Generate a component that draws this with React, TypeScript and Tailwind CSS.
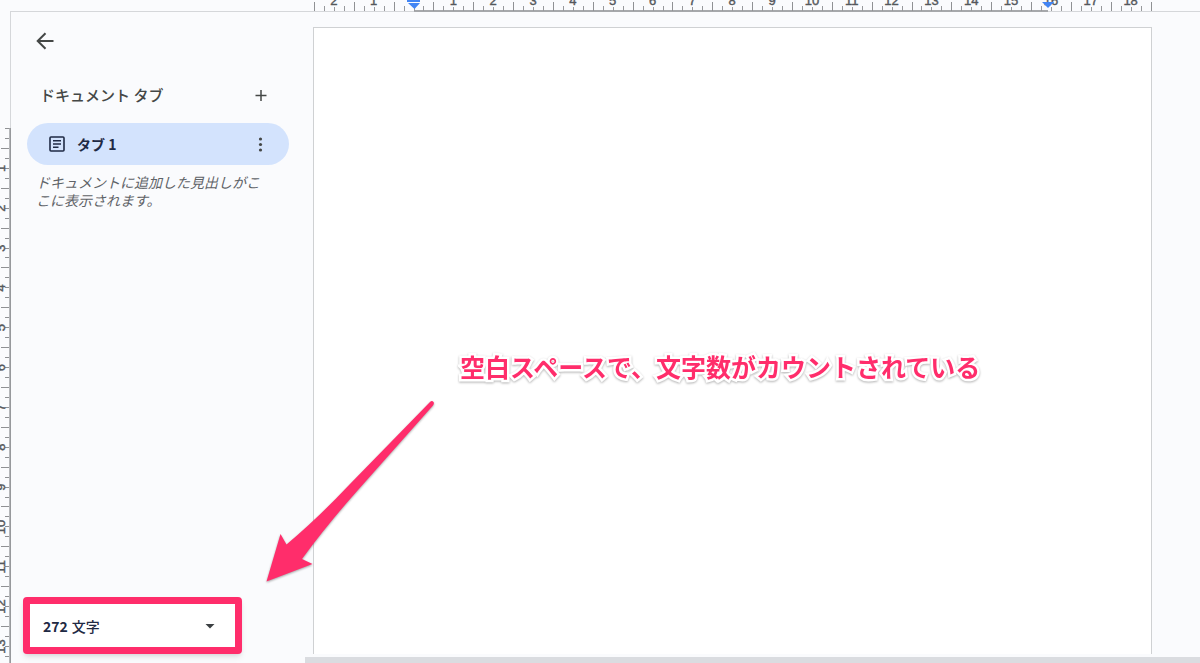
import { useState } from "react";

const UNIT = 39.84;
const range = (from: number, to: number) => Array.from({ length: to - from + 1 }, (_, i) => from + i);

function TopRuler() {
  const zero = 413.5;
  const ticks = range(-10, 74);
  return (
    <svg className="block shrink-0 w-full h-3" aria-hidden="true">
      <rect x="10" y="11" width="100%" height="1" fill="#d5d7da" />
      <rect x="414" y="10" width="634" height="2" fill="#a6a8ab" />
      {ticks.map((tick) => {
        const x = Math.round(zero + (tick * UNIT) / 4);
        const isHalf = Math.abs(tick % 4) === 2;
        const isNumber = tick % 4 === 0;
        const top = isHalf ? 2 : isNumber ? 7 : 6;
        return <rect key={tick} x={x} y={top} width="1" height={11 - top} fill={isHalf ? "#8f9194" : "#97999c"} />;
      })}
      {range(-2, 18).filter((n) => n !== 0).map((n) => (
        <text key={n} x={zero + n * UNIT} y="5" textAnchor="middle" fontFamily="Liberation Sans, sans-serif" fontSize="13" fill="#55585c" stroke="#55585c" strokeWidth="0.4">
          {Math.abs(n)}
        </text>
      ))}
      <path d="M407 0h13v2h-13z" fill="#4285f4" />
      <path d="M408 3h12l-5.500 6z" fill="#4285f4" />
      <path d="M1042 2h12l-6 6z" fill="#4285f4" />
    </svg>
  );
}

function LeftRuler() {
  const zero = 116.5;
  return (
    <svg className="block shrink-0 w-[10px] h-full" aria-hidden="true">
      {range(0, 53).map((tick) => {
        const y = Math.round(zero - 0.5 + (tick * UNIT) / 4);
        const isHalf = tick % 4 === 2;
        const left = isHalf ? 1 : 5;
        return <rect key={tick} x={left} y={y} width={10 - left} height="1" fill="#8f9194" />;
      })}
      <rect x="9" y={zero} width="1" height="100%" fill="#b5b7ba" />
      {range(1, 13).map((n) => (
        <text key={n} transform={`translate(5 ${zero + n * UNIT}) rotate(-90)`} textAnchor="middle" fontFamily="Liberation Sans, sans-serif" fontSize="13" fill="#55585c" stroke="#55585c" strokeWidth="0.4">
          {n}
        </text>
      ))}
    </svg>
  );
}

function WordCount() {
  const [unit, setUnit] = useState("chars");
  return (
    <div className="relative flex items-center h-[57px] w-[219px] ml-3 pl-[13px] pt-px text-[14px] text-[#1f2a44] bg-white border-[7px] border-[#ff2d6b] rounded-[4px] shadow-md">
      <label htmlFor="count-unit" className="font-bold">272</label>
      <select
        id="count-unit"
        className="appearance-none flex-1 h-full pl-1 font-medium bg-transparent outline-none"
        value={unit}
        onChange={(e) => setUnit(e.target.value)}
      >
        <option value="chars">文字</option>
        <option value="pages">ページ</option>
      </select>
      <svg className="absolute right-5 w-[10px] h-[5px] pointer-events-none" viewBox="0 0 10 5">
        <path d="M0.500 0h9L5 4.500z" fill="#3c4043" />
      </svg>
    </div>
  );
}

function Sidebar() {
  return (
    <aside className="relative flex flex-col shrink-0 w-[303px] pb-[9px] border-l border-[#d5d7da]">
      {/* ruler edge, darker than the panel border */}
      <div className="absolute -left-px top-[116px] bottom-0 w-px bg-[#97999c]"></div>
      <button aria-label="戻る" className="w-6 h-6 ml-[22px] mt-[17px]">
        <svg width="24" height="24" viewBox="0 0 24 24" fill="none" stroke="#444746" strokeWidth="2">
          <path d="M20.500 12H5M12.500 4.200L4.700 12l7.800 7.800" />
        </svg>
      </button>
      <div className="flex items-center justify-between h-6 mt-[30px] pl-[29px] pr-[46px]">
        <h2 className="text-[15px] font-medium text-[#444746]">ドキュメント タブ</h2>
        <button aria-label="タブを追加" className="w-3 h-6">
          <svg width="12" height="24" viewBox="0 0 12 24" fill="none" stroke="#444746" strokeWidth="1.500">
            <path d="M0.500 12.500h11M6 7v11" />
          </svg>
        </button>
      </div>
      <div className="flex items-center h-[42px] mt-4 ml-4 mr-6 px-[22px] rounded-full bg-[#d3e3fd]">
        <svg width="16" height="16" viewBox="0 0 16 16" fill="none" stroke="#1f2a44" strokeWidth="1.600">
          <rect x="1" y="1" width="14" height="14" rx="1" />
          <path d="M4 4.800h8M4 8h8M4 11.200h5.500" />
        </svg>
        <button className="flex-1 pl-3 text-left text-[14px] font-bold text-[#1f2a44]">タブ 1</button>
        <button aria-label="タブのオプション" className="w-3 h-6">
          <svg width="12" height="24" viewBox="0 0 12 24" fill="#444746">
            <circle cx="5.500" cy="7" r="1.600" />
            <circle cx="5.500" cy="12.500" r="1.600" />
            <circle cx="5.500" cy="18" r="1.600" />
          </svg>
        </button>
      </div>
      <p className="mt-2 ml-[25px] mr-[46px] text-[14px] leading-[18px] italic text-[#5f6368]">
        ドキュメントに追加した見出しがここに表示されます。
      </p>
      <div className="mt-auto">
        <WordCount />
      </div>
    </aside>
  );
}

export default function App() {
  return (
    <div className="relative flex flex-col h-screen overflow-hidden bg-[#fafbfd] font-['Noto_Sans_CJK_JP',sans-serif]">
      <TopRuler />
      <div className="flex flex-1 min-h-0">
        <LeftRuler />
        <Sidebar />
        <main className="flex flex-col flex-1">
          <div className="flex-1 mt-[15px] mr-12 mb-[3px] bg-white border border-b-0 border-[#cfd1d3]"></div>
          <div className="h-[6px] -ml-2 bg-[#dadce0]"></div>
        </main>
      </div>
      <p className="absolute left-[460px] top-[348px] text-[25px] leading-9 font-bold text-[#ff2d6b] whitespace-nowrap [-webkit-text-stroke:5px_white] [paint-order:stroke_fill] drop-shadow-[0_1px_1px_rgba(0,0,0,0.3)]">
        空白スペースで、文字数がカウントされている
      </p>
      <svg className="absolute left-[260px] top-[395px] w-[180px] h-[190px] pointer-events-none drop-shadow-[0_1px_1px_rgba(0,0,0,0.35)]" viewBox="260 395 180 190">
        <path d="M266.500 581.500L280.500 534L286.500 544.500Q318 518 350 484L430 402Q432 400 433.500 402Q434.500 403.500 433 405.500L358 490Q326 526 302 559L312.500 564Z" fill="#ff2d6b" />
      </svg>
    </div>
  );
}
